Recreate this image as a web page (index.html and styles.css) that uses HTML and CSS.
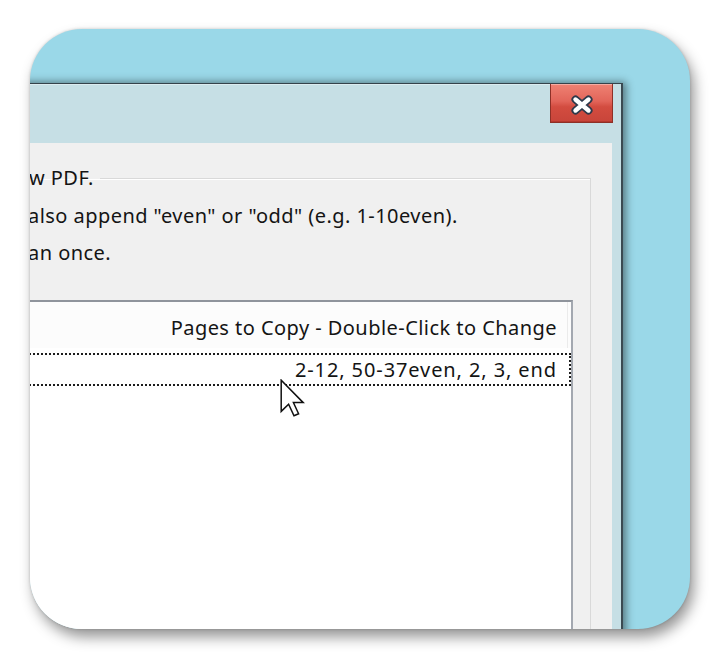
FILE: index.html
```html
<!DOCTYPE html>
<html lang="en">
<head>
<meta charset="utf-8">
<title>Copy Pages</title>
<link rel="stylesheet" href="styles.css">
</head>
<body>
  <div class="card">
    <div class="window">
      <div class="titlebar">
        <button class="close" aria-label="Close">
          <svg width="24" height="20" viewBox="0 0 24 20">
            <path d="M5.5 4.5 L18.5 15.5 M18.5 4.5 L5.5 15.5" stroke="#2e3a4b" stroke-width="8" stroke-linecap="round" fill="none"/>
            <path d="M5.5 4.5 L18.5 15.5 M18.5 4.5 L5.5 15.5" stroke="#ffffff" stroke-width="4.4" stroke-linecap="round" fill="none"/>
          </svg>
        </button>
      </div>
      <div class="client">
        <fieldset class="group">
          <legend class="group-title">w PDF.</legend>
          <p class="hint">also append "even" or "odd" (e.g. 1-10even).</p>
          <p class="hint">an once.</p>
          <div class="list">
            <div class="list-head">
              <div class="col-head">Pages to Copy - Double-Click to Change</div>
            </div>
            <div class="list-row">2-12, 50-37even, 2, 3, end</div>
          </div>
        </fieldset>
      </div>
    </div>
  </div>
  <svg class="cursor" width="25" height="38" viewBox="0 0 12.5 19">
    <path d="M0.6 0.6 L0.6 16.2 L4.3 12.6 L7 18.4 L9.3 17.4 L6.7 11.8 L11.6 11.8 Z" fill="#ffffff" stroke="#111" stroke-width="0.75" stroke-linejoin="miter"/>
  </svg>
</body>
</html>
```

FILE: styles.css
```css
* { box-sizing: border-box; }

html, body {
  margin: 0;
  background: #ffffff;
}

body {
  position: relative;
  width: 720px;
  height: 660px;
  overflow: hidden;
  font-family: "Noto Sans", "DejaVu Sans", sans-serif;
  font-size: 20px;
  letter-spacing: 0.45px;
  color: #141414;
}

/* rounded blue panel holding the dialog */
.card {
  margin: 29px 0 0 30px;
  width: 660px;
  height: 600px;
  border-radius: 52px;
  overflow: hidden;
  background: #9ad8e8;
  padding-top: 54px;
  box-shadow: 4px 8px 14px rgba(0, 0, 0, 0.42), 0 0 3px rgba(0, 0, 0, 0.18);
}

/* dialog window */
.window {
  margin-left: -20px;
  width: 613px;
  height: 580px;
  background: #c6dfe5;
  border-top: 1px solid #35434b;
  border-right: 2px solid #3b4a52;
  padding-right: 9px;
  box-shadow: 3px -1px 8px rgba(0, 0, 0, 0.45);
  display: flex;
  flex-direction: column;
}

.titlebar {
  flex: 0 0 59px;
  height: 59px;
  display: flex;
  justify-content: flex-end;
  align-items: flex-start;
  box-shadow: inset 0 1px 0 #dcecf0;
}

.close {
  width: 63px;
  height: 39px;
  margin-right: -1px;
  padding: 3px 0 0;
  border: 1px solid #8e3027;
  border-top: none;
  background: linear-gradient(#ef8273 0%, #e2655a 45%, #d34c40 60%, #c8453a 100%);
  box-shadow: inset 0 1px 0 rgba(255, 255, 255, 0.35), inset 0 -1px 0 rgba(120, 20, 10, 0.25);
  display: flex;
  align-items: center;
  justify-content: center;
}

.close svg { display: block; }

.client {
  flex: 1;
  min-height: 0;
  background: #f0f0f0;
}

/* etched group box */
.group {
  margin: 23px 21px 0 -20px;
  padding: 7px 0 0;
  border: 1px solid #d9d9d9;
  box-shadow: inset 1px 1px 0 #ffffff;
  min-width: 0;
  height: 520px;
}

.group-title {
  margin-left: 38px;
  padding: 0 6px 0 0;
  line-height: 24px;
}

.hint {
  margin: 0 0 0 37px;
  line-height: 37px;
  white-space: nowrap;
}

/* list view */
.list {
  margin: 29px 17px 0 0;
  height: 400px;
  background: #ffffff;
  border: 2px solid #a3a8b0;
  border-top-color: #8f949c;
}

.list-head {
  height: 46px;
  background: #fcfcfc;
  display: flex;
  justify-content: flex-end;
  padding-right: 3px;
}

.col-head {
  padding: 6px 10px 0 0;
  line-height: 40px;
  border-right: 1px solid #ebebeb;
  white-space: nowrap;
}

.list-row {
  margin-top: 5px;
  height: 33px;
  line-height: 29px;
  text-align: right;
  padding-right: 12px;
  border: 2px dotted #1c1c1c;
  letter-spacing: 0.9px;
  white-space: nowrap;
}

/* mouse pointer hovering over the row */
.cursor {
  position: absolute;
  left: 280px;
  top: 379px;
}
```
